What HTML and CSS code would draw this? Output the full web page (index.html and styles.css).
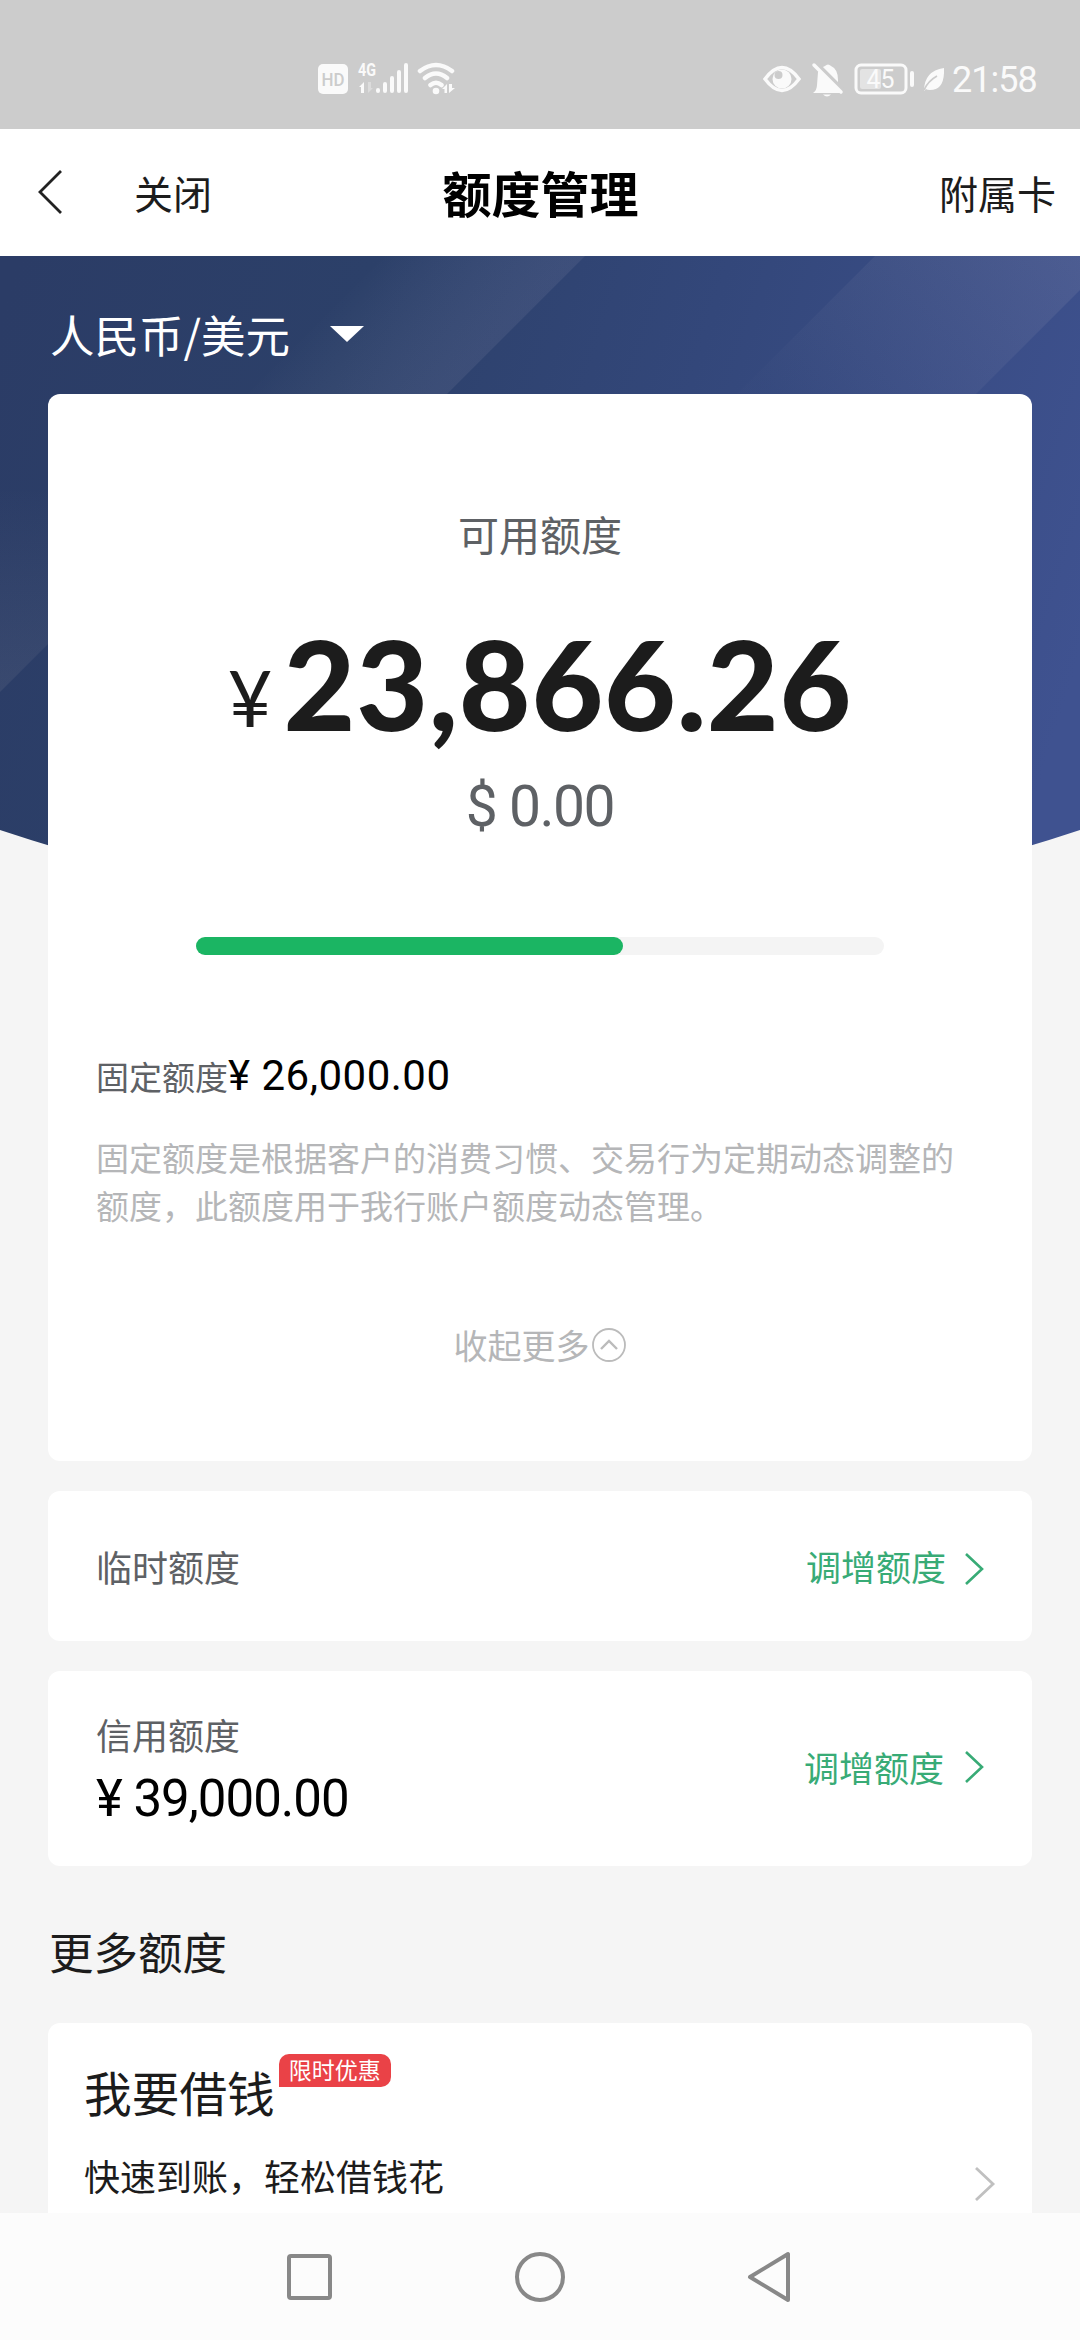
FILE: index.html
```html
<!DOCTYPE html>
<html lang="zh-CN">
<head>
<meta charset="utf-8">
<title>额度管理</title>
<link rel="stylesheet" href="styles.css">
</head>
<body>
<div class="screen">
  <header class="status">
    <svg class="status-left" width="150" height="40" viewBox="0 0 150 40" fill="#fafafa">
      <rect x="0" y="5" width="30" height="30" rx="5"/>
      <text class="num hd" x="15" y="27" text-anchor="middle" textLength="23" lengthAdjust="spacingAndGlyphs">HD</text>
      <text class="num net" x="40" y="17" textLength="18" lengthAdjust="spacingAndGlyphs">4G</text>
      <path d="M41 28l5-5v11h-3v-6z"/>
      <path d="M50 23v11l5-5h-2v-6z" opacity=".35"/>
      <g stroke="#fafafa" stroke-width="4" stroke-linecap="round"><path d="M60 31v1M67 25v7M74 19v13M81 13v19M88 6v26"/></g>
      <g fill="none" stroke="#fafafa" stroke-width="4.5" stroke-linecap="round"><path d="M102 12q16-12 32 0M107 19q11-9 22 0M112.500 26q5.500-4.500 11 0"/></g>
      <circle cx="118" cy="32" r="3.300"/>
      <path d="M124 30l5-5v9h-2.500v-4zM131 25v9l6-5h-3v-4z"/>
    </svg>
    <div class="status-right">
      <svg width="182" height="40" viewBox="0 0 182 40" fill="#fafafa">
        <path d="M3 20Q20-3 37 20Q20 43 3 20z" fill="none" stroke="#fafafa" stroke-width="3.500"/>
        <circle cx="20" cy="20" r="9.500"/>
        <circle cx="16.500" cy="16" r="4" fill="#cccccc"/>
        <path d="M56 13q4-5 7-6q3-3 6 0q7 3 7 14v9l4 4H51q4-3 4-8z"/>
        <path d="M53 3l27 27" stroke="#cccccc" stroke-width="4"/>
        <path d="M52 6l27 27" stroke="#fafafa" stroke-width="3.500" stroke-linecap="round"/>
        <path d="M61 35.500h8q-4 4-8 0z"/>
        <rect x="94" y="6" width="50" height="28" rx="5" fill="none" stroke="#fafafa" stroke-width="3"/>
        <rect x="98" y="10" width="21" height="20" rx="2" opacity=".5"/>
        <text class="num bat" x="118.500" y="29" text-anchor="middle" textLength="28" lengthAdjust="spacingAndGlyphs">45</text>
        <rect x="148" y="12" width="4" height="16" rx="2"/>
        <path d="M182 9q1 22-14 22q-3 0-4-1l-2 2q0-20 20-23z"/>
        <path d="M162 31q4-9 13-14" fill="none" stroke="#cccccc" stroke-width="1.800"/>
      </svg>
      <span class="num clock">21:58</span>
    </div>
  </header>

  <nav class="topbar">
    <div class="top-left">
      <svg width="26" height="44" viewBox="0 0 26 44" fill="none" stroke="#222" stroke-width="2.800"><path d="M24 1L3 22l21 21"/></svg>
      <span>关闭</span>
    </div>
    <h1 class="title">额度管理</h1>
    <span class="top-right">附属卡</span>
  </nav>

  <main class="content">
    <svg class="hero" width="1080" height="640" viewBox="0 0 1080 640">
      <defs>
        <linearGradient id="base" gradientUnits="userSpaceOnUse" x1="0" y1="60" x2="1080" y2="400">
          <stop offset="0" stop-color="#2b3c66"/><stop offset=".3" stop-color="#2c4069"/><stop offset=".6" stop-color="#33477a"/><stop offset="1" stop-color="#3f5290"/>
        </linearGradient>
        <linearGradient id="band1" gradientUnits="userSpaceOnUse" x1="420" y1="-40" x2="515" y2="55">
          <stop offset="0" stop-color="#fff" stop-opacity="0"/><stop offset="1" stop-color="#b9b5c8" stop-opacity=".1"/>
        </linearGradient>
        <linearGradient id="band2" gradientUnits="userSpaceOnUse" x1="1080" y1="0" x2="860" y2="220">
          <stop offset="0" stop-color="#c6bfc9" stop-opacity=".12"/><stop offset="1" stop-color="#c6bfc9" stop-opacity=".01"/>
        </linearGradient>
        <linearGradient id="band3" gradientUnits="userSpaceOnUse" x1="0" y1="230" x2="0" y2="436">
          <stop offset="0" stop-color="#b9b5b8" stop-opacity="0"/><stop offset="1" stop-color="#b9b5b8" stop-opacity=".1"/>
        </linearGradient>
        <clipPath id="arc"><path d="M0 0H1080V574Q540 754 0 574z"/></clipPath>
      </defs>
      <g clip-path="url(#arc)">
        <path fill="url(#base)" d="M0 0h1080v640H0z"/>
        <path fill="url(#band1)" d="M330 0H585L445 140H190z"/>
        <path fill="url(#band2)" d="M875 0H1080V34L970 144H731z"/>
        <path fill="url(#band3)" d="M0 200H60V376L0 436z"/>
      </g>
    </svg>

    <div class="currency">
      <span>人民币/美元</span>
      <svg width="34" height="16" viewBox="0 0 34 16"><path d="M0 0h34L17 16z" fill="#fff"/></svg>
    </div>

    <section class="card summary">
      <p class="avail">可用额度</p>
      <p class="num amount"><span class="yen">¥</span><span class="big">23,866.26</span></p>
      <p class="num usd">$ 0.00</p>
      <div class="track"><div class="fill" style="width:62%"></div></div>
      <p class="fixed"><span>固定额度</span><span class="num fixed-sum">¥ 26,000.00</span></p>
      <p class="note">固定额度是根据客户的消费习惯、交易行为定期动态调整的额度，此额度用于我行账户额度动态管理。</p>
      <div class="collapse">
        <span>收起更多</span>
        <svg width="36" height="36" viewBox="0 0 36 36" fill="none" stroke="#bbb"><circle cx="18" cy="18" r="16" stroke-width="1.800"/><path d="M10 22l8-8 8 8" stroke-width="2.400"/></svg>
      </div>
    </section>

    <section class="card row temp">
      <span class="label">临时额度</span>
      <a class="raise"><span>调增额度</span><svg width="21" height="32" viewBox="0 0 21 32" fill="none" stroke="#38ab76" stroke-width="2.600"><path d="M2 1l16 15L2 31"/></svg></a>
    </section>

    <section class="card row credit">
      <div class="credit-text"><span class="label">信用额度</span><span class="num credit-sum">¥ 39,000.00</span></div>
      <a class="raise wide"><span>调增额度</span><svg width="21" height="32" viewBox="0 0 21 32" fill="none" stroke="#38ab76" stroke-width="2.600"><path d="M2 1l16 15L2 31"/></svg></a>
    </section>

    <h2 class="more">更多额度</h2>

    <section class="card loan">
      <div class="loan-head"><span class="loan-title">我要借钱</span><span class="badge">限时优惠</span></div>
      <div class="loan-sub"><span>快速到账，轻松借钱花</span><svg width="22" height="34" viewBox="0 0 22 34" fill="none" stroke="#c0c0c0" stroke-width="2.800"><path d="M2 1l17 16L2 33"/></svg></div>
    </section>
  </main>

  <footer class="sysnav">
    <svg width="52" height="52" viewBox="0 0 52 52" fill="none" stroke="#888" stroke-width="4"><rect x="6" y="5" width="41" height="42" rx="2"/></svg>
    <svg width="52" height="52" viewBox="0 0 52 52" fill="none" stroke="#888" stroke-width="4"><circle cx="26" cy="26" r="23"/></svg>
    <svg width="52" height="52" viewBox="0 0 52 52" fill="none" stroke="#888" stroke-width="4" stroke-linejoin="round"><path d="M43 3v46L5 26z"/></svg>
  </footer>
</div>
</body>
</html>
```
FILE: styles.css
```css
* { box-sizing: border-box; margin: 0; padding: 0; }
body {
  font-family: "Noto Sans CJK SC", sans-serif;
  background: #f5f5f5;
  color: #1c1c1c;
}
svg { display: block; flex: none; }
.num { font-family: Roboto, "Noto Sans CJK SC", sans-serif; }
.screen { width: 1080px; height: 2340px; display: flex; flex-direction: column; overflow: hidden; }

.status {
  height: 129px; flex: none; background: #cccccc;
  display: flex; justify-content: space-between;
  padding: 59px 43px 0 318px;
}
.status-right { display: flex; gap: 8px; }
.hd { font-size: 18px; font-weight: 500; fill: #cccccc; }
.net { font-size: 18px; font-weight: 700; }
.bat { font-size: 25px; }
.clock { font-size: 36px; line-height: 42px; color: #fafafa; width: 85px; letter-spacing: -1px; white-space: nowrap; }

.topbar {
  height: 127px; flex: none; background: #fff;
  display: grid; grid-template-columns: 1fr auto 1fr; align-items: center;
  padding: 0 24px 2px 37px; font-size: 39px; line-height: 56px;
}
.top-left { display: flex; align-items: center; gap: 71px; }
.title { font-size: 49px; line-height: 56px; font-weight: 700; color: #000; margin-left: -12px; }
.top-right { text-align: right; }

.content { flex: 1; min-height: 0; position: relative; padding: 0 48px; overflow: hidden; }
.hero { position: absolute; left: 0; top: 0; z-index: -1; }
.currency {
  height: 138px; display: flex; align-items: center; gap: 40px;
  padding: 17px 0 0 2px; color: #fff; font-size: 44.500px; line-height: 60px;
}

.card { background: #fff; border-radius: 12px; }
.summary { height: 1067px; padding: 111px 48px 0; }
.avail { text-align: center; font-size: 41px; line-height: 56px; color: #5e6165; }
.amount {
  display: flex; justify-content: center; align-items: baseline; gap: 11px;
  height: 150px; margin-top: 47px; line-height: 150px; color: #1c1c1c;
}
.yen { font-family: Lato, sans-serif; font-size: 77px; line-height: 100px; padding-bottom: 4px; position: relative; top: -4px; }
.big { font-family: Lato, sans-serif; font-size: 124px; font-weight: 900; letter-spacing: .7px; }
.usd { text-align: center; font-size: 57px; line-height: 70px; color: #5e6165; margin-top: 14px; letter-spacing: -1.500px; }
.track { width: 688px; height: 18px; margin: 95px auto 0; border-radius: 9px; background: #f4f4f4; }
.fill { height: 18px; border-radius: 9px; background: #1bb563; }
.fixed { display: flex; align-items: baseline; margin-top: 95px; line-height: 52px; height: 52px; font-size: 33px; color: #5e6165; }
.fixed-sum { font-size: 42px; color: #000; letter-spacing: .5px; }
.note { font-size: 33px; line-height: 48px; color: #b5b6b8; margin-top: 31px; width: 864px; }
.collapse { display: flex; justify-content: center; align-items: center; gap: 1px; margin-top: 92px; font-size: 34px; line-height: 48px; color: #b5b6b8; }

.row { display: flex; justify-content: space-between; align-items: center; margin-top: 30px; padding: 0 47px 0 48px; }
.label { font-size: 36px; line-height: 52px; color: #5e6165; }
.raise { display: flex; align-items: center; gap: 18px; font-size: 35px; line-height: 52px; color: #38ab76; }
.raise.wide { gap: 20px; padding-bottom: 4px; }
.temp { height: 150px; }
.temp svg { margin-top: 5px; }
.credit { height: 195px; }
.credit-text { display: flex; flex-direction: column; }
.credit-sum { font-size: 51px; line-height: 60px; padding-top: 9px; color: #000; letter-spacing: -1px; }

.more { font-size: 44.500px; line-height: 60px; font-weight: 400; margin: 55px 0 0 1px; }
.loan { margin-top: 42px; height: 240px; padding: 31px 36px 0; }
.loan-head { display: flex; align-items: flex-start; gap: 4px; }
.loan-title { font-size: 47.700px; line-height: 60px; padding-top: 8px; }
.badge {
  width: 112px; height: 33px; border-radius: 10px 10px 10px 0; background: #ea4247;
  color: #fff; font-size: 23px; line-height: 30px; text-align: center;
}
.loan-sub { display: flex; justify-content: space-between; align-items: flex-start; margin-top: 27px; font-size: 36px; line-height: 52px; }
.loan-sub svg { margin-top: 18px; }

.sysnav {
  height: 127px; flex: none; background: #fcfcfc;
  display: flex; justify-content: center; gap: 179px; padding-top: 38px;
}
```
